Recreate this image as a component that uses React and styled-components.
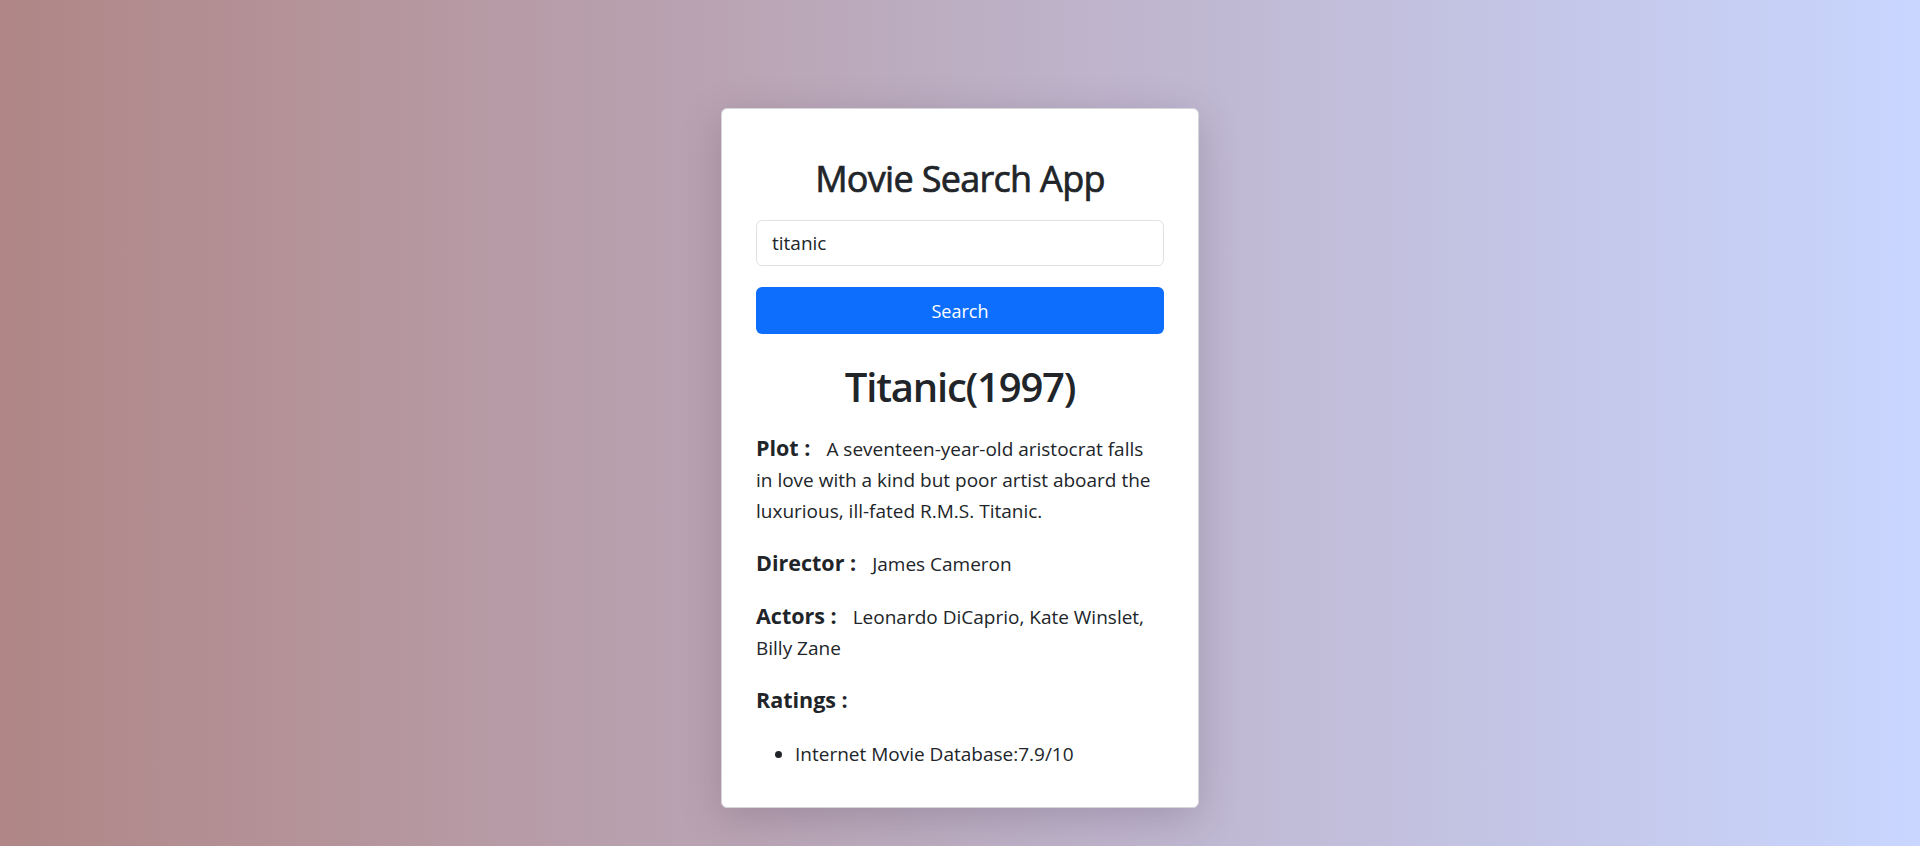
import React from "react";
import styled, { createGlobalStyle } from "styled-components";

const GlobalStyle = createGlobalStyle`
  html, body {
    margin: 0;
    padding: 0;
  }
  body {
    font-family: "Open Sans", "Noto Sans", sans-serif;
    color: #212529;
    background: linear-gradient(to right, #b08686, #c9d6ff);
    min-height: 846px;
  }
  * { box-sizing: border-box; }
`;

const Page = styled.div`
  min-height: 846px;
  display: flex;
  justify-content: center;
  align-items: flex-start;
  padding-top: 108px;
`;

const Card = styled.div`
  width: 478px;
  background: #fff;
  border: 1px solid #d6d6da;
  border-radius: 6px;
  box-shadow: 0 10px 40px rgba(60, 40, 70, 0.22);
  padding: 48px 34px 37px;
`;

const Title = styled.h1`
  margin: 0 0 20px;
  font-size: 36px;
  font-weight: 500;
  -webkit-text-stroke: 0.7px #212529;
  letter-spacing: -0.7px;
  text-align: center;
  line-height: 43px;
`;

const Input = styled.input`
  display: block;
  width: 100%;
  height: 46px;
  padding: 0 15px;
  font-family: inherit;
  font-size: 19px;
  color: #212529;
  border: 1px solid #dee2e6;
  border-radius: 6px;
  outline: none;
`;

const Button = styled.button`
  display: block;
  width: 100%;
  height: 47px;
  margin-top: 21px;
  background: #0d6efd;
  color: #fff;
  border: none;
  border-radius: 6px;
  font-family: inherit;
  font-size: 18px;
`;

const MovieTitle = styled.h2`
  margin: 29px 0 23px;
  font-size: 40px;
  font-weight: 600;
  letter-spacing: -1.2px;
  text-align: center;
  line-height: 48px;
`;

const Field = styled.p`
  margin: 0 0 22px;
  font-size: 19px;
  line-height: 31px;
`;

const Label = styled.strong`
  font-size: 21.5px;
  line-height: 1;
  font-weight: 700;
  margin-right: 16px;
`;

const List = styled.ul`
  margin: 0;
  padding-left: 39px;
  font-size: 19px;
  line-height: 31px;
`;

export default function App() {
  return (
    <>
      <GlobalStyle />
      <Page>
        <Card>
          <Title>Movie Search App</Title>
          <Input defaultValue="titanic" />
          <Button>Search</Button>
          <MovieTitle>Titanic(1997)</MovieTitle>
          <Field>
            <Label>Plot :</Label>A seventeen-year-old aristocrat falls in love with a kind but poor artist aboard the luxurious, ill-fated R.M.S. Titanic.
          </Field>
          <Field>
            <Label>Director :</Label>James Cameron
          </Field>
          <Field>
            <Label>Actors :</Label>Leonardo DiCaprio, Kate Winslet, Billy Zane
          </Field>
          <Field>
            <Label>Ratings :</Label>
          </Field>
          <List>
            <li>Internet Movie Database:7.9/10</li>
          </List>
        </Card>
      </Page>
    </>
  );
}
